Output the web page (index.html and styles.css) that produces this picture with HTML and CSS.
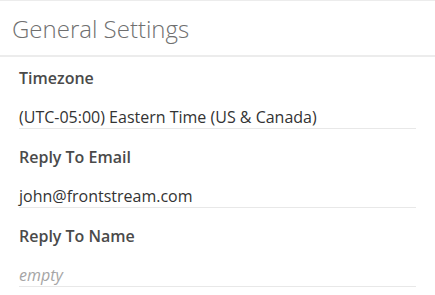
FILE: index.html
```html
<!DOCTYPE html>
<html>
<head>
<meta charset="utf-8">
<link rel="stylesheet" href="styles.css">
</head>
<body>
<div class="panel">
  <div class="panel-header">General Settings</div>
  <div class="panel-body">
    <div class="field">
      <div class="field-label">Timezone</div>
      <div class="field-value">(UTC-05:00) Eastern Time (US &amp; Canada)</div>
    </div>
    <div class="field">
      <div class="field-label">Reply To Email</div>
      <div class="field-value">john@frontstream.com</div>
    </div>
    <div class="field">
      <div class="field-label">Reply To Name</div>
      <div class="field-value empty">empty</div>
    </div>
  </div>
</div>
</body>
</html>
```
FILE: styles.css
```css
html, body {
  margin: 0;
  padding: 0;
  background: #fff;
}
body {
  font-family: "Open Sans", "Liberation Sans", sans-serif;
}
.panel {
  border-top: 1px solid #ececec;
}
.panel-header {
  font-size: 24px;
  font-weight: 300;
  line-height: 32px;
  color: #6f6f6f;
  padding: 12px 12px 10px;
  border-bottom: 2px solid #ececec;
}
.panel-body {
  padding: 11px 19px 0;
}
.field {
  margin-bottom: 18px;
}
.field-label {
  font-size: 16px;
  font-weight: 600;
  line-height: 20px;
  color: #4a4a4a;
  margin-bottom: 19px;
}
.field-value {
  font-size: 16px;
  line-height: 20px;
  color: #333;
  padding-bottom: 1px;
  border-bottom: 1px solid #e8e8e8;
}
.field-value.empty {
  font-style: italic;
  color: #a5a5a5;
}
```
